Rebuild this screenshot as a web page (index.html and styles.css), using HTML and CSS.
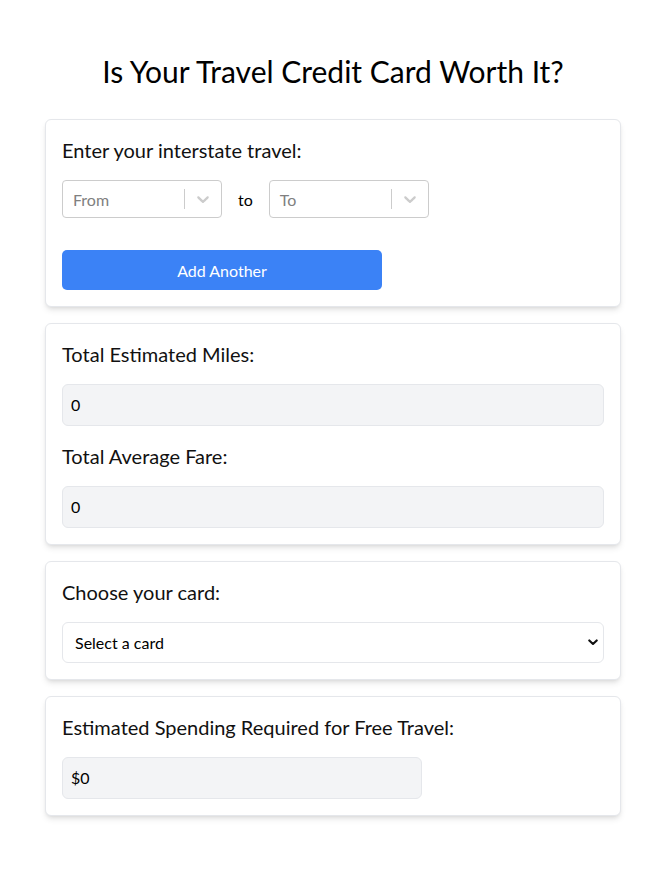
FILE: index.html
```html
<!DOCTYPE html>
<html lang="en">
<head>
<meta charset="utf-8">
<title>Is Your Travel Credit Card Worth It?</title>
<link rel="stylesheet" href="styles.css">
</head>
<body>
<div class="page">
  <h1 class="title">Is Your Travel Credit Card Worth It?</h1>
  <div class="stack">
    <section class="card">
      <h2 class="label">Enter your interstate travel:</h2>
      <div class="route">
        <div class="rs">
          <div class="rs-value"><span class="rs-placeholder">From</span></div>
          <div class="rs-indicators">
            <span class="rs-sep"></span>
            <span class="rs-arrow"><svg width="20" height="20" viewBox="0 0 20 20"><path fill="#cccccc" d="M4.516 7.548c0.436-0.446 1.043-0.481 1.576 0l3.908 3.747 3.908-3.747c0.533-0.481 1.141-0.446 1.574 0 0.436 0.445 0.408 1.197 0 1.615-0.406 0.418-4.695 4.502-4.695 4.502-0.217 0.223-0.502 0.335-0.787 0.335s-0.57-0.112-0.789-0.335c0 0-4.287-4.084-4.695-4.502s-0.436-1.170 0-1.615z"/></svg></span>
          </div>
        </div>
        <span class="to">to</span>
        <div class="rs">
          <div class="rs-value"><span class="rs-placeholder">To</span></div>
          <div class="rs-indicators">
            <span class="rs-sep"></span>
            <span class="rs-arrow"><svg width="20" height="20" viewBox="0 0 20 20"><path fill="#cccccc" d="M4.516 7.548c0.436-0.446 1.043-0.481 1.576 0l3.908 3.747 3.908-3.747c0.533-0.481 1.141-0.446 1.574 0 0.436 0.445 0.408 1.197 0 1.615-0.406 0.418-4.695 4.502-4.695 4.502-0.217 0.223-0.502 0.335-0.787 0.335s-0.57-0.112-0.789-0.335c0 0-4.287-4.084-4.695-4.502s-0.436-1.170 0-1.615z"/></svg></span>
          </div>
        </div>
      </div>
      <button class="btn" type="button">Add Another</button>
    </section>

    <section class="card">
      <h2 class="label">Total Estimated Miles:</h2>
      <div class="field">0</div>
      <h2 class="label">Total Average Fare:</h2>
      <div class="field">0</div>
    </section>

    <section class="card">
      <h2 class="label">Choose your card:</h2>
      <div class="select-wrap">
        <select class="select">
          <option>Select a card</option>
        </select>
        <svg class="select-arrow" width="10" height="7" viewBox="0 0 10 7"><path d="M1.3 1.4 L5 5 L8.7 1.4" fill="none" stroke="#111" stroke-width="2.1" stroke-linecap="round" stroke-linejoin="round"/></svg>
      </div>
    </section>

    <section class="card">
      <h2 class="label">Estimated Spending Required for Free Travel:</h2>
      <div class="field field-narrow">$0</div>
    </section>
  </div>
</div>
</body>
</html>
```

FILE: styles.css
```css
* { box-sizing: border-box; }

html, body {
  margin: 0;
  padding: 0;
  background: #ffffff;
}

body {
  font-family: "Lato", "Roboto", "Liberation Sans", sans-serif;
  color: #111111;
}

.page {
  padding: 53px 0 40px 8px;
}

.title {
  margin: 0 0 30px;
  font-size: 30px;
  line-height: 36px;
  font-weight: 400;
  text-align: center;
  color: #000;
}

.stack {
  width: 576px;
  margin: 0 auto;
  display: flex;
  flex-direction: column;
  gap: 16px;
}

.card {
  background: #fff;
  border: 1px solid #e5e7eb;
  border-radius: 6px;
  padding: 16px;
  box-shadow: 0 4px 6px -1px rgba(0,0,0,0.1), 0 2px 4px -2px rgba(0,0,0,0.1);
  display: flex;
  flex-direction: column;
  align-items: flex-start;
}

.label {
  margin: 0 0 16px;
  font-size: 20px;
  line-height: 28px;
  font-weight: 400;
  color: #111;
}

.field + .label { margin-top: 16px; }

.route {
  display: flex;
  align-items: center;
  gap: 16px;
}

.rs {
  width: 160px;
  height: 38px;
  border: 1px solid #cccccc;
  border-radius: 4px;
  display: flex;
  align-items: center;
  background: #fff;
}

.rs-value {
  flex: 1;
  padding: 2px 8px;
  display: flex;
  align-items: center;
}

.rs-placeholder {
  margin: 0 2px;
  font-size: 16px;
  color: #808080;
}

.rs-indicators {
  display: flex;
  align-items: stretch;
  align-self: stretch;
}

.rs-sep {
  width: 1px;
  background: #cccccc;
  margin: 8px 0;
}

.rs-arrow {
  padding: 8px;
  display: flex;
  align-items: center;
}

.rs-arrow svg { display: block; }

.to {
  font-size: 16px;
  color: #000;
}

.btn {
  margin-top: 32px;
  width: 320px;
  height: 40px;
  border: 0;
  border-radius: 5px;
  background: #3b82f6;
  color: #fff;
  font-family: inherit;
  font-size: 16px;
  cursor: pointer;
}

.field {
  width: 100%;
  height: 42px;
  padding: 8px;
  background: #f3f4f6;
  border: 1px solid #e5e7eb;
  border-radius: 6px;
  font-size: 16px;
  line-height: 24px;
  color: #000;
}

.field-narrow { width: 360px; }

.select-wrap {
  position: relative;
  width: 100%;
}

.select {
  appearance: none;
  -webkit-appearance: none;
  width: 100%;
  height: 41px;
  padding: 0 12px;
  background: #fff;
  border: 1px solid #e5e7eb;
  border-radius: 6px;
  font-family: inherit;
  font-size: 16px;
  color: #000;
  display: block;
}

.select-arrow {
  position: absolute;
  right: 6px;
  top: 17px;
  pointer-events: none;
}
```
